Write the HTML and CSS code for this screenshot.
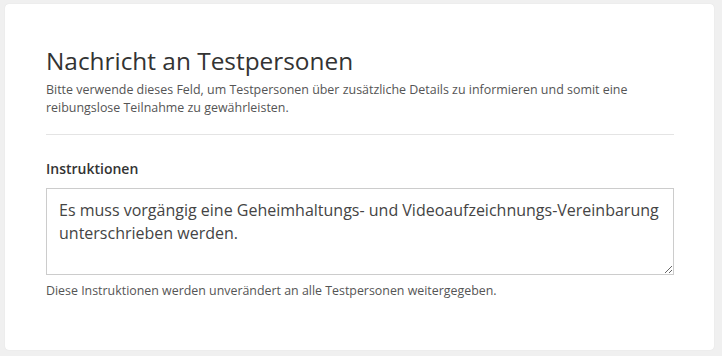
FILE: index.html
```html
<!DOCTYPE html>
<html>
<head>
<meta charset="UTF-8">
<title>Nachricht an Testpersonen</title>
<link rel="stylesheet" href="styles.css">
</head>
<body>
<div class="card">
  <h2 class="card_title">Nachricht an Testpersonen</h2>
  <p class="card_intro">Bitte verwende dieses Feld, um Testpersonen über zusätzliche Details zu informieren und somit eine reibungslose Teilnahme zu gewährleisten.</p>
  <hr class="card_rule">
  <label class="field_label" for="instr">Instruktionen</label>
  <textarea id="instr" class="field_input">Es muss vorgängig eine Geheimhaltungs- und Videoaufzeichnungs-Vereinbarung unterschrieben werden.</textarea>
  <p class="field_help">Diese Instruktionen werden unverändert an alle Testpersonen weitergegeben.</p>
</div>
</body>
</html>
```

FILE: styles.css
```css
html, body {
  margin: 0px;
}

body {
  background: #f0f0f0;
  padding: 4px 8px 6px 5px;
  font-family: "Open Sans", "Noto Sans", sans-serif;
  color: #444;
}

.card {
  background: #ffffff;
  border-radius: 4px;
  box-shadow: 0 0 1px rgba(0,0,0,0.12);
  padding: 42px 40px 40px 41px;
  height: 346px;
  box-sizing: border-box;
}

.card_title {
  margin: 0;
  font-size: 24.4px;
  font-weight: normal;
  line-height: 29px;
  color: #333;
}

.card_intro {
  margin: 6px 0 0 0;
  font-size: 12.45px;
  line-height: 18px;
  color: #555;
}

.card_rule {
  margin: 17px 0 0 0;
  border: none;
  border-top: 1px solid #e4e4e4;
}

.field_label {
  display: block;
  margin-top: 24px;
  font-size: 14px;
  font-weight: 600;
  line-height: 19px;
  color: #333;
}

.field_input {
  display: block;
  margin-top: 10px;
  width: 100%;
  height: 87px;
  box-sizing: border-box;
  padding: 10px 12px;
  border: 1px solid #cccccc;
  border-radius: 0;
  font: normal 16px/23px "Open Sans", "Noto Sans", sans-serif;
  color: #444;
  resize: vertical;
}

.field_help {
  margin: 7px 0 0 0;
  font-size: 12.4px;
  line-height: 18px;
  color: #555;
}
```
